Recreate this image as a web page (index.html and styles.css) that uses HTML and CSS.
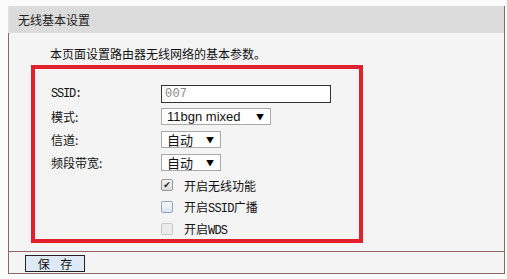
FILE: index.html
```html
<!DOCTYPE html>
<html lang="zh-CN">
<head>
<meta charset="utf-8">
<title>无线基本设置</title>
<link rel="stylesheet" href="styles.css">
</head>
<body>
<div class="panel">
  <div class="panel-head">无线基本设置</div>
  <div class="panel-body">
    <p class="intro">本页面设置路由器无线网络的基本参数。</p>
    <div class="highlight">
      <div class="row">
        <span class="label mono">SSID:</span>
        <span class="input mono">007</span>
      </div>
      <div class="row">
        <span class="label">模式:</span>
        <span class="select wide"><span class="sel-text">11bgn mixed</span><span class="arrow">▼</span></span>
      </div>
      <div class="row">
        <span class="label">信道:</span>
        <span class="select"><span class="sel-text">自动</span><span class="arrow">▼</span></span>
      </div>
      <div class="row">
        <span class="label">频段带宽:</span>
        <span class="select"><span class="sel-text">自动</span><span class="arrow">▼</span></span>
      </div>
      <div class="check-row">
        <span class="box checked">✔</span>
        <span class="check-text">开启无线功能</span>
      </div>
      <div class="check-row">
        <span class="box focus"></span>
        <span class="check-text">开启<span class="mono">SSID</span>广播</span>
      </div>
      <div class="check-row">
        <span class="box disabled"></span>
        <span class="check-text">开启<span class="mono">WDS</span></span>
      </div>
    </div>
  </div>
  <div class="panel-foot">
    <button class="save">保 存</button>
  </div>
</div>
</body>
</html>
```
FILE: styles.css
```css
html, body {
  margin: 0;
  padding: 0;
}
body {
  background: #fbfbfb;
  font-family: "Noto Sans CJK SC", "DejaVu Sans", sans-serif;
  font-size: 12px;
  color: #111;
  width: 507px;
  height: 279px;
  overflow: hidden;
}
.panel {
  margin: 6px 0 0 8px;
  width: 497px;
  border: 1px solid #8a6868;
  border-top: none;
  background: #f4f4f4;
  box-sizing: border-box;
  height: 268px;
  display: flex;
  flex-direction: column;
}
.panel-head {
  height: 27px;
  background: #dcdcdc;
  line-height: 27px;
  padding-left: 9px;
  font-size: 12px;
  color: #222;
  margin-left: -1px;
  border-left: 1px solid #e0e0e0;
}
.panel-body {
  padding: 0 0 8px 22px;
}
.intro {
  margin: 0;
  height: 32px;
  box-sizing: border-box;
  padding: 14px 0 0 19px;
  line-height: 14px;
  font-size: 12px;
}
.highlight {
  width: 332px;
  height: 178px;
  box-sizing: border-box;
  border: 4px solid #e0202c;
  padding: 13px 0 0 16px;
}
.mono {
  font-family: "Liberation Mono", "DejaVu Sans Mono", monospace;
  font-size: 12px;
  letter-spacing: -1.2px;
}
.row {
  height: 23px;
  display: flex;
  align-items: center;
}
.label {
  width: 110px;
  font-size: 12px;
}
.input {
  width: 170px;
  height: 18px;
  box-sizing: border-box;
  border: 1px solid #333;
  background: #fff;
  color: #888;
  font-size: 12px;
  line-height: 16px;
  padding-left: 3px;
  letter-spacing: 0.2px;
}
.select {
  width: 60px;
  height: 17px;
  box-sizing: border-box;
  border: 1px solid #a9a9a9;
  background: #fff;
  display: flex;
  align-items: center;
  justify-content: space-between;
  padding: 0 6px 0 5px;
}
.select.wide {
  width: 110px;
}
.sel-text {
  font-size: 13px;
  line-height: 15px;
}
.select.wide .sel-text {
  font-family: "Liberation Sans", Arial, sans-serif;
}
.arrow {
  font-size: 8px;
  line-height: 10px;
  color: #000;
}
.check-row {
  height: 22px;
  display: flex;
  align-items: center;
  padding-left: 110px;
}
.box {
  width: 12px;
  height: 12px;
  box-sizing: border-box;
  border: 1px solid #999;
  border-radius: 2px;
  background: linear-gradient(#f2f2f2, #dcdcdc);
  display: flex;
  align-items: center;
  justify-content: center;
  font-size: 9px;
  line-height: 10px;
  color: #222;
  margin-right: 11px;
}
.box.focus {
  border: 1px solid #8fa5c8;
  background: linear-gradient(#f6f8fc, #dde4ee);
}
.box.disabled {
  border: 1px solid #c9c9c9;
  background: #ececec;
}
.check-text {
  font-size: 12px;
}
.check-text .mono {
  font-size: 12px;
  letter-spacing: -0.8px;
}
.panel-foot {
  border-top: 1px solid #8a6868;
  flex: 1;
  padding: 3px 0 0 16px;
}
.save {
  width: 60px;
  height: 17px;
  box-sizing: border-box;
  border: 1px solid #222;
  background: #dde9f5;
  font-family: "Noto Sans CJK SC", sans-serif;
  font-size: 12px;
  line-height: 13px;
  padding: 0;
  margin: 0;
  letter-spacing: 4px;
  text-indent: 4px;
  color: #111;
}
```
